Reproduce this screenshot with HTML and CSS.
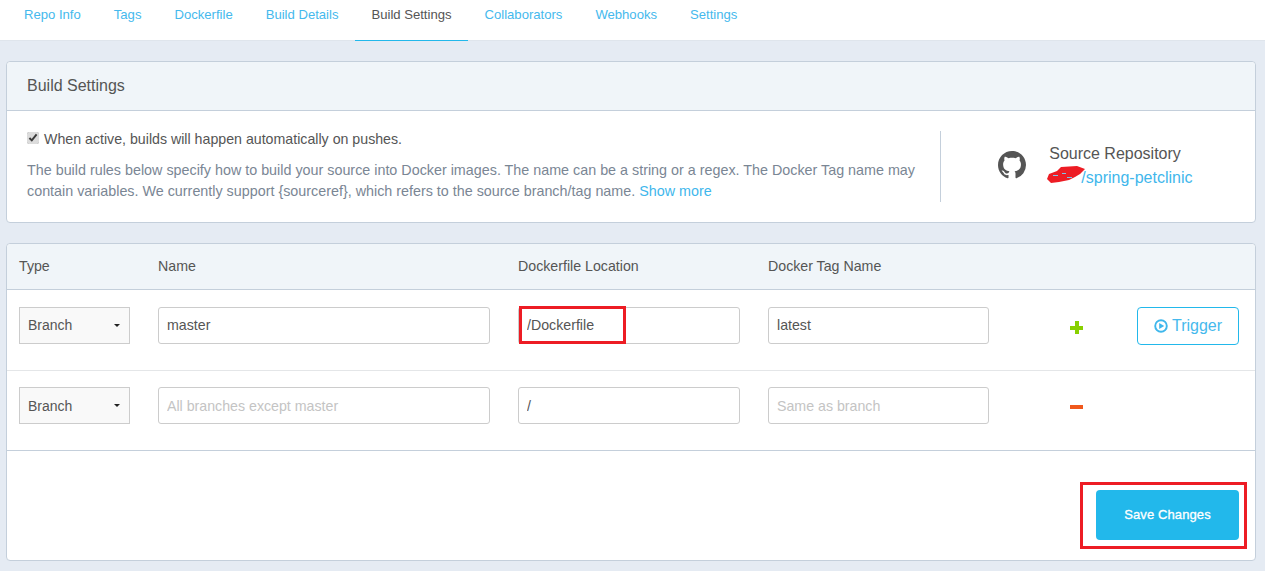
FILE: index.html
```html
<!DOCTYPE html>
<html lang="en">
<head>
<meta charset="utf-8">
<title>Build Settings</title>
<link rel="stylesheet" href="styles.css">
</head>
<body>
<nav class="tabs">
  <a class="tab" href="#">Repo Info</a>
  <a class="tab" href="#">Tags</a>
  <a class="tab" href="#">Dockerfile</a>
  <a class="tab" href="#">Build Details</a>
  <a class="tab active" href="#">Build Settings</a>
  <a class="tab" href="#">Collaborators</a>
  <a class="tab" href="#">Webhooks</a>
  <a class="tab" href="#">Settings</a>
</nav>
<main class="content">
  <section class="panel info-panel">
    <h2 class="panel-title">Build Settings</h2>
    <div class="info-body">
      <div class="info-text">
        <label class="auto"><input class="check" type="checkbox" checked>When active, builds will happen automatically on pushes.</label>
        <p class="desc"><span class="line">The build rules below specify how to build your source into Docker images. The name can be a string or a regex. The Docker Tag name may</span> <span class="line">contain variables. We currently support {sourceref}, which refers to the source branch/tag name. <a href="#">Show more</a></span></p>
      </div>
      <div class="source">
        <svg class="gh" viewBox="0 0 16 16" aria-hidden="true"><path fill="#555" d="M8 0C3.58 0 0 3.58 0 8c0 3.54 2.29 6.53 5.47 7.59.4.07.55-.17.55-.38 0-.19-.01-.82-.01-1.49-2.01.37-2.53-.49-2.69-.94-.09-.23-.48-.94-.82-1.13-.28-.15-.68-.52-.01-.53.63-.01 1.08.58 1.23.82.72 1.21 1.87.87 2.33.66.07-.52.28-.87.51-1.07-1.78-.2-3.64-.89-3.64-3.95 0-.87.31-1.59.82-2.15-.08-.2-.36-1.02.08-2.12 0 0 .67-.21 2.2.82.64-.18 1.32-.27 2-.27s1.36.09 2 .27c1.53-1.04 2.2-.82 2.2-.82.44 1.1.16 1.92.08 2.12.51.56.82 1.27.82 2.15 0 3.07-1.87 3.75-3.65 3.95.29.25.54.73.54 1.48 0 1.07-.01 1.93-.01 2.2 0 .21.15.46.55.38A8.01 8.01 0 0 0 16 8c0-4.42-3.58-8-8-8z"/></svg>
        <div class="source-text">
          <div class="source-label">Source Repository</div>
          <a class="source-link" href="#"><span class="owner">user</span>/spring-petclinic</a>
          <svg class="scribble" viewBox="0 0 38 17" aria-hidden="true"><path fill="#ed1c24" d="M0 13 2 8l8-3 4-4 16-1 8 3-5 5-5 3-6 3-10 2-8 1z"/><path fill="#7fc4e8" d="M6 9h5v1H6zM15 7h4v1h-4zM20 11h5v1h-5z"/></svg>
        </div>
      </div>
    </div>
  </section>

  <section class="panel rules-panel">
    <div class="rule-grid rule-head">
      <span>Type</span><span>Name</span><span>Dockerfile Location</span><span>Docker Tag Name</span>
    </div>
    <div class="rule-grid rule-row">
      <div class="select">Branch<i class="caret"></i></div>
      <input class="field" value="master">
      <input class="field" value="/Dockerfile">
      <input class="field" value="latest">
      <span class="sign plus"></span>
      <button class="trigger" type="button"><svg class="play" viewBox="0 0 14 14" aria-hidden="true"><circle cx="7" cy="7" r="5.8" fill="none" stroke="#3fb7ec" stroke-width="1.9"/><path fill="#3fb7ec" d="M5.2 3.9 10.2 7l-5 3.1z"/></svg>Trigger</button>
    </div>
    <div class="rule-grid rule-row last">
      <div class="select">Branch<i class="caret"></i></div>
      <input class="field" placeholder="All branches except master">
      <input class="field" value="/">
      <input class="field" placeholder="Same as branch">
      <span class="sign minus"></span>
    </div>
    <div class="actions">
      <button class="save" type="button">Save Changes</button>
    </div>
    <div class="mark mark-file"></div>
    <div class="mark mark-save"></div>
  </section>
</main>
</body>
</html>
```

FILE: styles.css
```css
* { box-sizing: border-box; }
html, body { margin: 0; padding: 0; }
body {
  background: #e5ebf3;
  font-family: "Liberation Sans", Arial, sans-serif;
  font-size: 14px;
  color: #555;
  height: 571px;
  overflow: hidden;
}
a { color: #3fb7ec; text-decoration: none; }

.tabs {
  display: flex;
  height: 41px;
  background: #fff;
  border-bottom: 1px solid #dfe5ec;
  padding-left: 7.5px;
}
.tab {
  height: 41px;
  padding: 7px 16.5px 0;
  line-height: 16px;
  font-size: 13.1px;
  color: #45b9ed;
}
.tab.active {
  color: #555;
  border-bottom: 1px solid #22b8eb;
}

.content { padding: 20px 9px 0 6px; }
.panel {
  position: relative;
  background: #fff;
  border: 1px solid #c4cfdb;
  border-radius: 4px;
}
.info-panel { height: 162px; margin-bottom: 20px; }
.panel-title {
  margin: 0;
  height: 49px;
  padding: 0 20px;
  background: #f0f5f9;
  border-bottom: 1px solid #c4cfdb;
  border-radius: 4px 4px 0 0;
  font-size: 16px;
  font-weight: 400;
  line-height: 47px;
  color: #555;
}
.info-body { display: flex; padding: 20px 0 0 20px; }
.info-text { width: 914px; padding-right: 20px; }
.auto { display: flex; align-items: center; height: 18px; margin-top: -1px; font-size: 14.2px; color: #555; }
.check { margin: 0 5px 3px 0; width: 12px; height: 12px; accent-color: #dcdcdc; }
.desc { margin: 12px 0 0; font-size: 14.33px; line-height: 21px; color: #7a8694; }
.line { display: block; white-space: nowrap; }
.source {
  width: 315px;
  height: 71px;
  border-left: 1px solid #c4cfdb;
  display: flex;
  align-items: center;
  padding-left: 57px;
}
.gh { width: 28px; height: 28px; margin: 0 24px 3px 0; }
.source-text { position: relative; margin-bottom: 2px; font-size: 16px; line-height: 24px; }
.source-label { margin-left: -1px; color: #555; }
.source-link { color: #3fb7ec; }
.owner { color: transparent; }
.scribble { position: absolute; left: -3px; top: 24px; width: 38px; height: 17px; }

.rules-panel { height: 318px; }
.rule-grid {
  display: grid;
  grid-template-columns: 111px 332px 222px 221px 92px 102px;
  column-gap: 28px;
  align-items: start;
  padding-left: 12px;
}
.rule-head {
  height: 46px;
  padding-top: 14px;
  background: #f0f5f9;
  border-bottom: 1px solid #c4cfdb;
  border-radius: 4px 4px 0 0;
  color: #555;
  font-size: 14.2px;
}
.rule-row { height: 81px; padding-top: 17px; border-bottom: 1px solid #e4e6e8; }
.rule-row.last { height: 80px; padding-top: 16px; border-bottom-color: #c4cfdb; }
.select {
  position: relative;
  height: 37px;
  line-height: 35px;
  padding-left: 8px;
  background: #f9f9f9;
  border: 1px solid #ccc;
  color: #555;
}
.last .select { line-height: 37px; }
.caret {
  position: absolute;
  right: 9px;
  top: 16px;
  border-left: 3px solid transparent;
  border-right: 3px solid transparent;
  border-top: 3px solid #222;
}
.field {
  width: 100%;
  height: 37px;
  padding: 0 8px;
  border: 1px solid #ccc;
  border-radius: 3px;
  background: #fff;
  font: 14.2px "Liberation Sans", Arial, sans-serif;
  color: #555;
  outline: none;
}
.rule-row:not(.last) .field { padding-bottom: 2px; }
.field::placeholder { color: #c4c4c4; opacity: 1; }
.sign { position: relative; display: block; width: 13px; height: 13px; margin: 14px 0 0 53px; }
.plus::before { content: ""; position: absolute; left: 0; right: 0; top: 5px; height: 4px; background: #88d000; }
.plus::after { content: ""; position: absolute; top: 0; bottom: 0; left: 4.5px; width: 4px; background: #88d000; }
.minus::before { content: ""; position: absolute; left: 0; right: 0; top: 4px; height: 4px; background: #f0581c; }
.trigger {
  display: flex;
  align-items: center;
  justify-content: center;
  width: 102px;
  height: 38px;
  padding: 0;
  background: #fff;
  border: 1px solid #22b8eb;
  border-radius: 4px;
  color: #45b9ed;
  font: 16px "Liberation Sans", Arial, sans-serif;
}
.play { width: 14px; height: 14px; margin-right: 4px; }
.actions { display: flex; justify-content: flex-end; padding: 39px 16px 0 0; }
.save {
  width: 143px;
  height: 50px;
  padding: 0 0 2px;
  background: #22b8eb;
  border: 0;
  border-radius: 4px;
  color: #fff;
  font: 13px "Liberation Sans", Arial, sans-serif;
  letter-spacing: 0.1px;
  -webkit-text-stroke: 0.3px #fff;
}
.mark { position: absolute; border: 3px solid #ed1c24; pointer-events: none; }
.mark-file { left: 512px; top: 62px; width: 107px; height: 38px; }
.mark-save { left: 1073px; top: 238px; width: 167px; height: 67px; }
```
